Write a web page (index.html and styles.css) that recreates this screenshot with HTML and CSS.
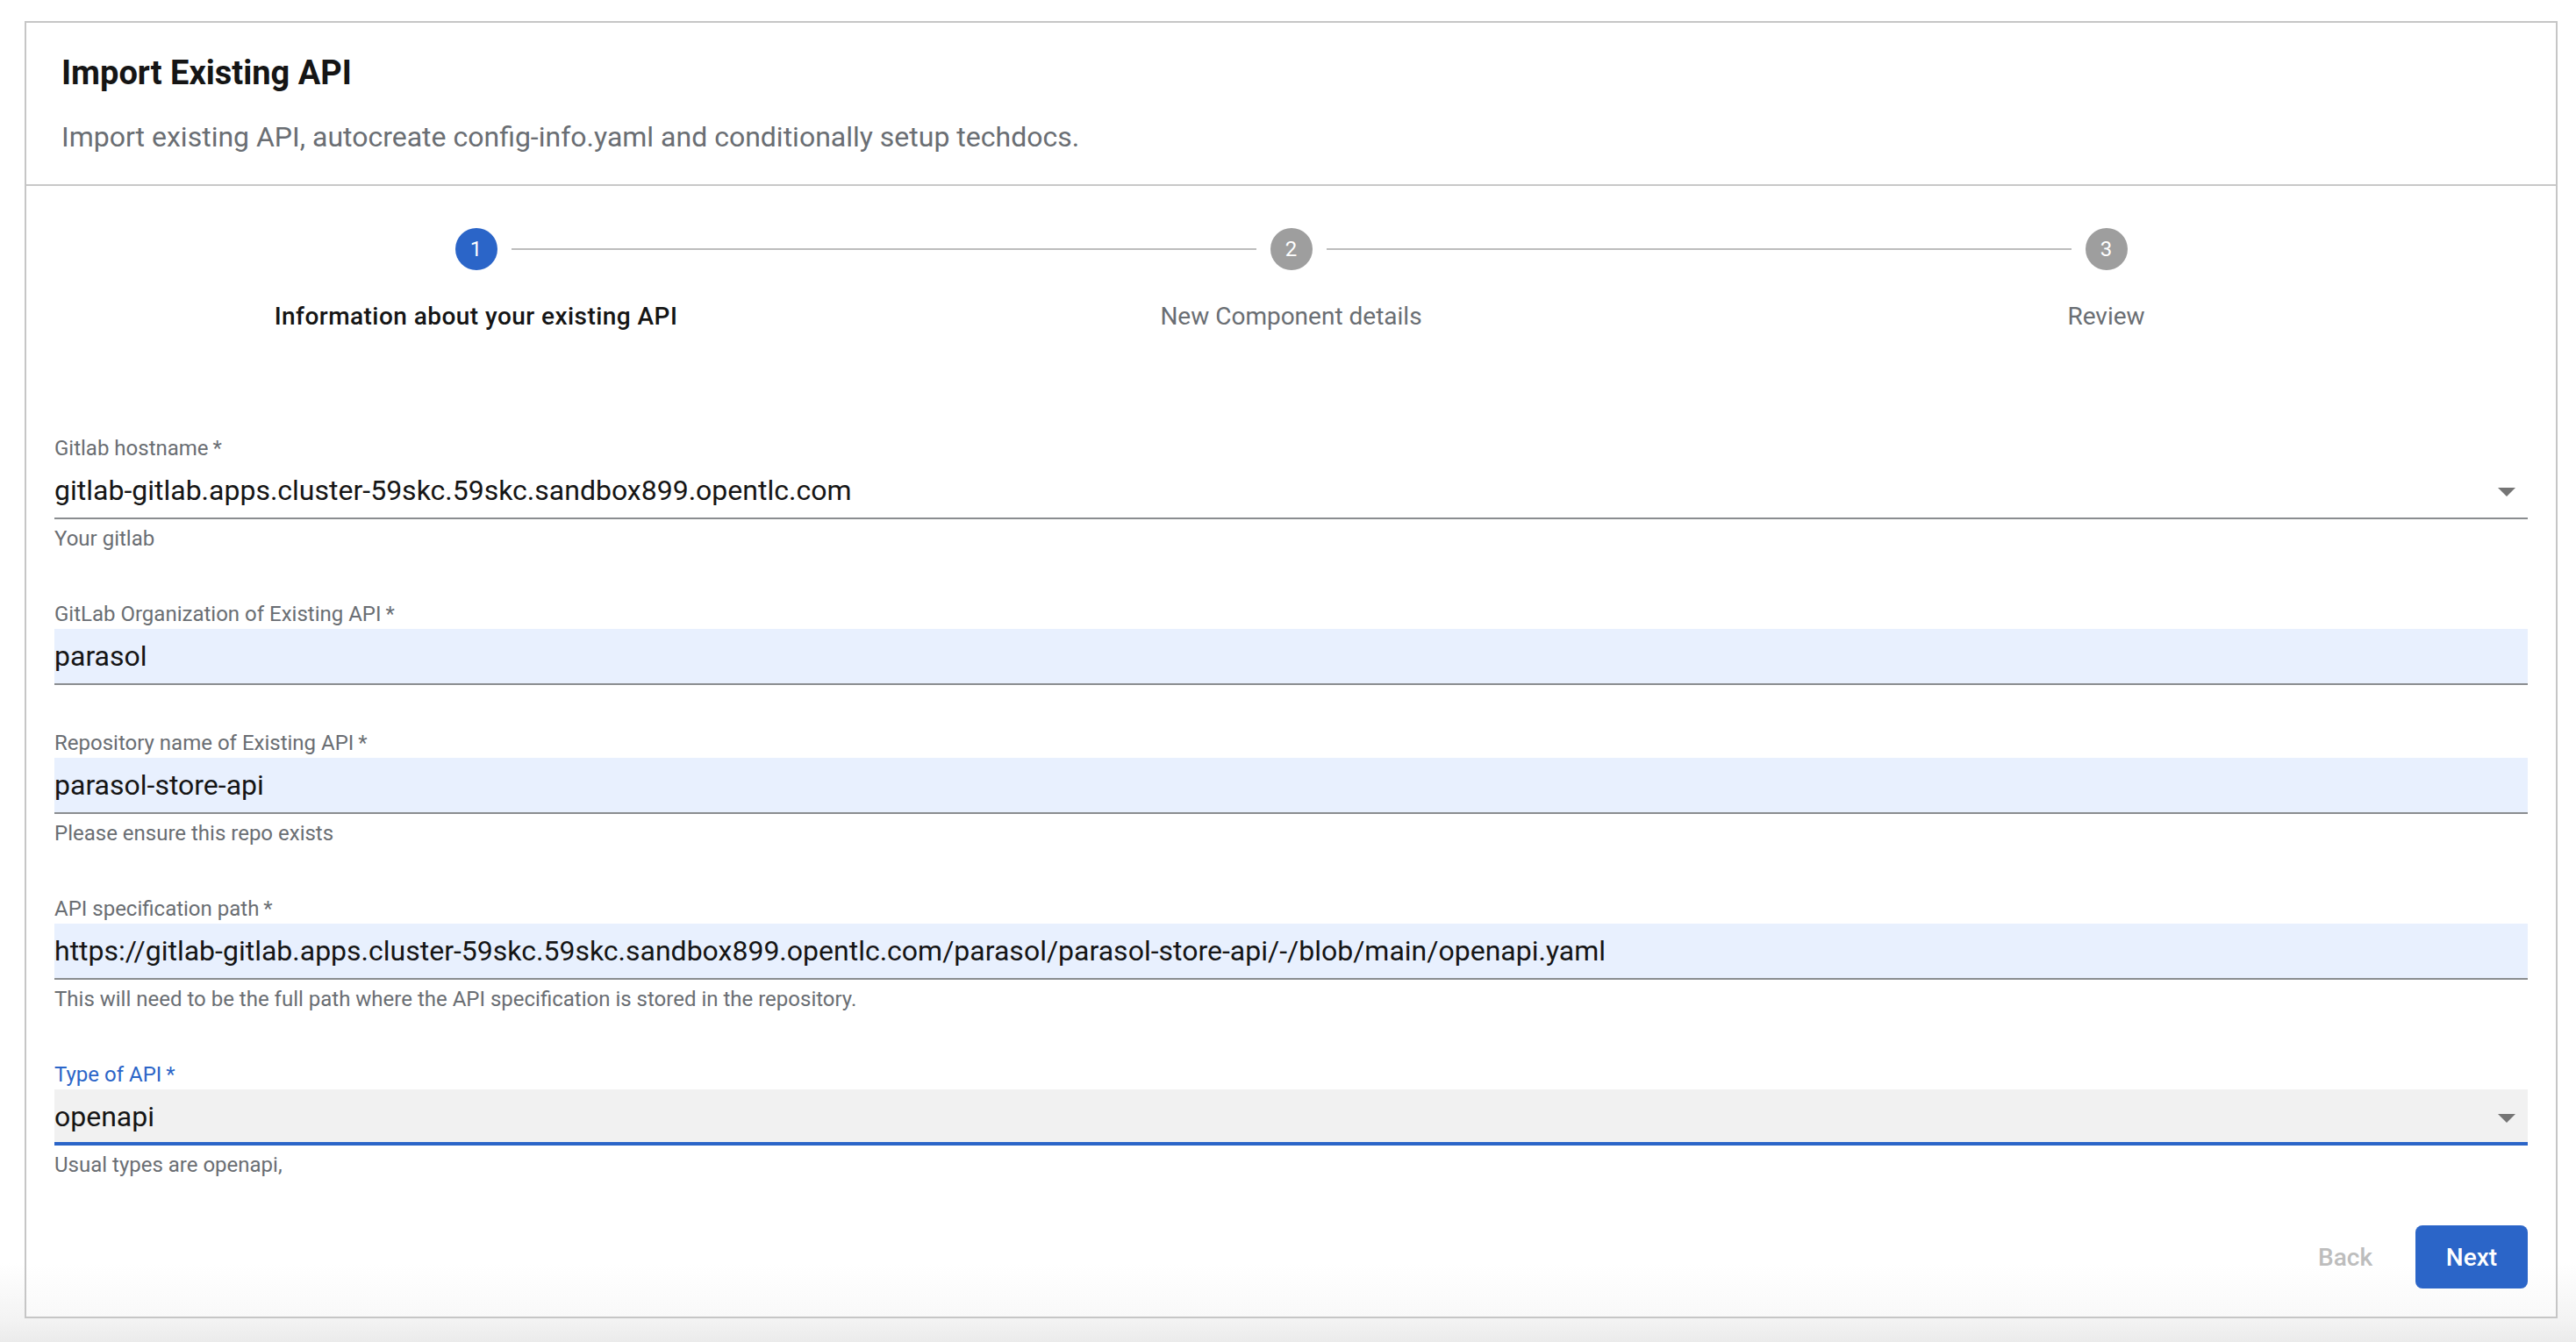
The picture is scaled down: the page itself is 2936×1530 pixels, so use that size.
FILE: index.html
```html
<!DOCTYPE html>
<html lang="en">
<head>
<meta charset="utf-8">
<title>Import Existing API</title>
<link rel="stylesheet" href="styles.css">
</head>
<body>
<div class="card">
  <header class="card-header">
    <h1 class="title">Import Existing API</h1>
    <p class="subtitle">Import existing API, autocreate config-info.yaml and conditionally setup techdocs.</p>
  </header>

  <ol class="stepper">
    <li class="step active">
      <span class="step-icon">1</span>
      <span class="step-label">Information about your existing API</span>
    </li>
    <li class="step">
      <span class="step-icon">2</span>
      <span class="step-label">New Component details</span>
    </li>
    <li class="step">
      <span class="step-icon">3</span>
      <span class="step-label">Review</span>
    </li>
  </ol>

  <form class="form">
    <div class="field">
      <label class="field-label">Gitlab hostname&#8201;*</label>
      <div class="input select">gitlab-gitlab.apps.cluster-59skc.59skc.sandbox899.opentlc.com<svg class="arrow" viewBox="0 0 48 48" width="48" height="48"><path d="M14 20l10 10 10-10z"/></svg></div>
      <p class="helper">Your gitlab</p>
    </div>

    <div class="field">
      <label class="field-label">GitLab Organization of Existing API&#8201;*</label>
      <div class="input autofill">parasol</div>
    </div>

    <div class="field">
      <label class="field-label">Repository name of Existing API&#8201;*</label>
      <div class="input autofill">parasol-store-api</div>
      <p class="helper">Please ensure this repo exists</p>
    </div>

    <div class="field">
      <label class="field-label">API specification path&#8201;*</label>
      <div class="input autofill">https://gitlab-gitlab.apps.cluster-59skc.59skc.sandbox899.opentlc.com/parasol/parasol-store-api/-/blob/main/openapi.yaml</div>
      <p class="helper">This will need to be the full path where the API specification is stored in the repository.</p>
    </div>

    <div class="field focused">
      <label class="field-label">Type of API&#8201;*</label>
      <div class="input select">openapi<svg class="arrow" viewBox="0 0 48 48" width="48" height="48"><path d="M14 20l10 10 10-10z"/></svg></div>
      <p class="helper">Usual types are openapi,</p>
    </div>

    <div class="actions">
      <button type="button" class="btn btn-back" disabled>Back</button>
      <button type="button" class="btn btn-next">Next</button>
    </div>
  </form>
</div>
</body>
</html>
```
FILE: styles.css
```css
* { box-sizing: border-box; }

html, body { margin: 0; }

body {
  padding: 24px 21px 0 28px;
  min-height: 1530px;
  font-family: Roboto, "Liberation Sans", sans-serif;
  color: #151515;
  background: linear-gradient(to bottom, #ffffff 0, #ffffff 1440px, #f3f3f3 1505px, #ebebeb 1530px);
}

.card {
  border: 2px solid #c6c6c6;
  background: linear-gradient(to bottom, #ffffff 0, #ffffff calc(100% - 60px), #f9f9f9 100%);
}

/* header */
.card-header {
  padding: 33px 40px 32px;
  border-bottom: 2px solid #c8c8c8;
}

.title {
  margin: 0;
  font-size: 38px;
  line-height: 48px;
  font-weight: 700;
  color: #151515;
}

.subtitle {
  margin: 27px 0 0;
  font-size: 32px;
  line-height: 44px;
  color: #6a6e73;
}

/* stepper */
.stepper {
  list-style: none;
  margin: 0;
  padding: 48px;
  display: flex;
}

.step {
  flex: 1 1 0;
  position: relative;
  display: flex;
  flex-direction: column;
  align-items: center;
}

.step + .step::before {
  content: "";
  position: absolute;
  top: 23px;
  left: calc(-50% + 40px);
  right: calc(50% + 40px);
  border-top: 2px solid #bdbdbd;
}

.step-icon {
  width: 48px;
  height: 48px;
  border-radius: 50%;
  background: #9e9e9e;
  color: #ffffff;
  font-size: 24px;
  line-height: 48px;
  text-align: center;
}

.step.active .step-icon { background: #2b65c8; }

.step-label {
  margin-top: 33px;
  margin-bottom: -1px;
  font-size: 28px;
  line-height: 40px;
  color: #6a6e73;
  text-align: center;
}

.step.active .step-label {
  color: #151515;
  font-weight: 500;
  letter-spacing: 0.45px;
}

/* form */
.form {
  padding: 66px 32px 32px;
  display: flex;
  flex-direction: column;
  gap: 49px;
}

.field {
  display: flex;
  flex-direction: column;
}

.field-label {
  font-size: 24px;
  line-height: 34px;
  color: #6a6e73;
}

.field.focused .field-label { color: #2b65c8; }

.input {
  position: relative;
  height: 64px;
  padding: 12px 0;
  font-size: 32px;
  line-height: 38px;
  color: #151515;
  border-bottom: 2px solid #8a8d90;
  white-space: nowrap;
}

.input.autofill { background: #e8f0fe; }

.field.focused .input {
  background: #f1f1f1;
  border-bottom: 4px solid #2b65c8;
  padding-bottom: 10px;
}

.arrow {
  position: absolute;
  right: 0;
  top: 8px;
  fill: #757575;
}

.helper {
  margin: 2px 0 0;
  font-size: 24px;
  line-height: 40px;
  color: #6a6e73;
}

.actions {
  display: flex;
  justify-content: flex-end;
  gap: 16px;
}

.btn {
  min-width: 128px;
  height: 72px;
  padding: 0 32px;
  border: 0;
  border-radius: 8px;
  font-family: Roboto, "Liberation Sans", sans-serif;
  font-size: 28px;
  font-weight: 500;
  background: transparent;
}

.btn-back { color: #bdbdbd; }

.btn-next {
  background: #2b65c8;
  color: #ffffff;
}
```
